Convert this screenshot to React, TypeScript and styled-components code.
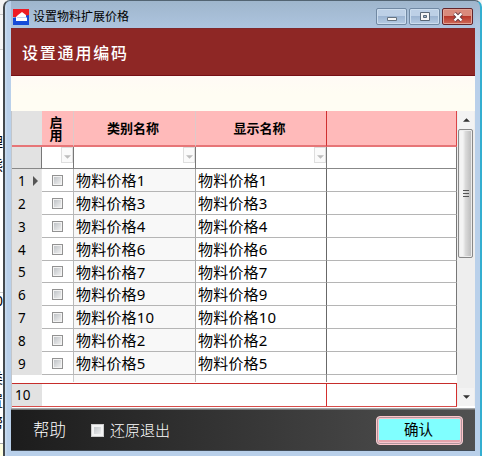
import React from "react";
import styled, { createGlobalStyle, css } from "styled-components";

const GlobalStyle = createGlobalStyle`
  * { box-sizing: border-box; }
  body { margin: 0; overflow: hidden; }
  #root { font-family: "Noto Sans", "Noto Sans CJK SC", sans-serif; color: #000; }
`;

const Desktop = styled.div`
  display: flex;
  width: 482px;
  height: 456px;
  overflow: hidden;
  background: #f4f4f4;
`;

const Backdrop = styled.div`
  position: relative;
  width: 3px;
  flex: none;
  overflow: hidden;
  background: linear-gradient(#f3f3f3 0 14px, #c9c9c9 14px 15px, #f6f6f6 15px 49px, #d0d0d0 49px 50px, #fff 50px 292px, #ccc 292px 293px, #fff 293px 443px, #aaa 443px 444px, #ffffe1 444px);
`;

const Peek = styled.span<{ $top: number; $shift: number }>`
  position: absolute;
  top: ${(p) => p.$top}px;
  left: ${(p) => p.$shift}px;
  font-size: 14px;
  line-height: 16px;
`;

const Frame = styled.div`
  display: flex;
  flex-direction: column;
  width: 479px;
  height: 456px;
  padding: 0 5px 0 6px;
  border-style: solid;
  border-width: 1px 2px 0 2px;
  border-color: #536472 #34aed0 #536472 #43494e;
  border-radius: 7px 7px 0 0;
  background: linear-gradient(90deg, #c9dcf0 0 1px, #b9d0ea 2px 6px, transparent 6px), linear-gradient(#9db5cd 0, #b1c8e1 24px, #b9d0ea 60px);
`;

const TitleBar = styled.header`
  display: flex;
  align-items: center;
  height: 27px;
  flex: none;
  padding: 4px 2px 0 2px;
  background: linear-gradient(#9fb6cc, #adc4df);
`;

const Title = styled.span`
  flex: 1;
  margin-left: 4px;
  font-size: 12px;
  line-height: 16px;
`;

const Caption = styled.span<{ $danger?: boolean }>`
  display: grid;
  place-items: center;
  width: 31px;
  height: 17px;
  margin-left: 2px;
  border: 1px solid ${(p) => (p.$danger ? "#64242a" : "#7189a3")};
  border-radius: 2px;
  box-shadow: inset 0 0 0 1px ${(p) => (p.$danger ? "#e2a395" : "#ccddee")};
  background: ${(p) =>
    p.$danger
      ? "linear-gradient(#d98a7c 0 45%, #b8372b 50%, #cf6a58)"
      : "linear-gradient(#bdd0e6 0 45%, #9db5d2 50%, #b6cce4)"};
`;

const Client = styled.main`
  display: flex;
  flex-direction: column;
  width: 464px;
  height: 423px;
  flex: none;
  background: #fff;
`;

const Banner = styled.h1`
  margin: 0;
  height: 48px;
  padding: 0 11px;
  flex: none;
  border-top: 1px solid #80282c;
  border-bottom: 1px solid #760f15;
  background: #8e2725;
  color: #fff;
  font-size: 16px;
  font-weight: 500;
  line-height: 48px;
  letter-spacing: 1.8px;
`;

const Spacer = styled.div`
  height: 35px;
  flex: none;
  background: linear-gradient(#fffaf5, #fffdf3 50%);
`;

const Content = styled.div`
  display: flex;
  height: 297px;
  flex: none;
  border-left: 1px solid #c3c6ca;
`;

const Grid = styled.div`
  width: 445px;
`;

const Line = styled.div<{ $height: number }>`
  display: grid;
  grid-template-columns: 30px 32px 122px 131px 130px;
  height: ${(p) => p.$height}px;
`;

const HeadLine = styled(Line)`
  font-size: 13px;
  font-weight: 700;
  line-height: 13px;
  text-align: center;
`;

const HeadCell = styled.div<{ $edge: string }>`
  display: flex;
  align-items: center;
  justify-content: center;
  padding: 1px 3px 0 0;
  background: #ffbaba;
  border-right: 1px solid ${(p) => p.$edge};
  border-bottom: 2px solid #e77577;
`;

const HeadGutter = styled.div`
  background: #e2e2e2;
  border-bottom: 2px solid #e77577;
`;

const FilterCell = styled.div<{ $edge?: string }>`
  display: flex;
  justify-content: flex-end;
  align-items: flex-start;
  border-right: 1px solid ${(p) => p.$edge ?? "#777"};
  border-bottom: 1px solid #888;
`;

const FilterGutter = styled(FilterCell)`
  background: #e2e2e2;
`;

const DropButton = styled.span`
  display: grid;
  place-items: center;
  width: 12px;
  height: 16px;
  padding-top: 3px;
  border: 1px solid #dedede;
  background: #fafafa;
`;

const cell = css`
  display: flex;
  align-items: center;
  border-right: 1px solid #b9b9b9;
  border-bottom: 1px solid #b5b5b5;
`;

const NumberCell = styled.div`
  display: flex;
  align-items: center;
  justify-content: space-between;
  padding: 0 3px 0 6px;
  background: #e2e2e2;
  border-right: 1px solid #e9e9e9;
  font-size: 13.5px;
`;

const CheckCell = styled.div`
  ${cell}
  justify-content: center;
`;

const TextCell = styled.div<{ $tinted?: boolean }>`
  ${cell}
  padding: 1px 0 0 2px;
  background: ${(p) => (p.$tinted ? "#f8f8f8" : "#fff")};
  border-right-color: ${(p) => (p.$tinted ? "#aaa" : "#686868")};
  font-size: 15px;
  line-height: 19px;
  letter-spacing: 0.2px;
  white-space: nowrap;
`;

const BlankCell = styled.div`
  ${cell}
  border-right-color: #777;
`;

const TailLine = styled(Line)`
  background: #fff;
`;

const TailCell = styled.div<{ $edge?: string; $fill?: string }>`
  height: 7px;
  background: ${(p) => p.$fill ?? "#fff"};
  border-right: 1px solid ${(p) => p.$edge ?? "transparent"};
`;

const SummaryLine = styled.div`
  display: grid;
  grid-template-columns: 30px 285px 130px;
  height: 24px;
  border-top: 1px solid #c62d2b;
  border-bottom: 1px solid #d74c4a;
`;

const SummaryNumber = styled.div`
  padding: 1px 0 0 3px;
  background: #e2e2e2;
  font-size: 13.5px;
  line-height: 20px;
`;

const SummaryCell = styled.div`
  border-right: 1px solid #d3302e;
`;

const Check = styled.span<{ $large?: boolean }>`
  width: ${(p) => (p.$large ? 13 : 11)}px;
  height: ${(p) => (p.$large ? 13 : 11)}px;
  flex: none;
  border: 1px solid ${(p) => (p.$large ? "#ccc" : "#929292")};
  box-shadow: inset 0 0 0 ${(p) => (p.$large ? 2 : 1)}px #f3f3f3;
  background: linear-gradient(135deg, #b9bdc1, #f6f6f6);
`;

const ScrollBar = styled.div`
  display: flex;
  flex-direction: column;
  width: 18px;
  height: 295px;
  padding: 0 1px;
  background: #eee;
`;

const ScrollArrow = styled.span`
  display: grid;
  place-items: center;
  height: 18px;
  background: #f3f3f3;
`;

const Thumb = styled.span`
  display: grid;
  place-items: center;
  width: 15px;
  height: 129px;
  margin-bottom: auto;
  border: 1px solid #888;
  border-radius: 2px;
  box-shadow: inset 0 0 0 1px #ededed;
  background: linear-gradient(90deg, #f4f4f4 0 30%, #dadada 50%, #b9b9b9);
`;

const Footer = styled.footer`
  display: flex;
  align-items: center;
  height: 43px;
  flex: none;
  padding: 1px 12px 0 22px;
  border-top: 1px solid #a5a7a9;
  border-bottom: 1px solid #414c57;
  background: linear-gradient(90deg, #1c1c1c, #373737 52%, #515151);
  box-shadow: inset 0 1px #777;
  color: #fff;
`;

const Help = styled.span`
  width: 58px;
  font-size: 16.5px;
  line-height: 20px;
  font-weight: 300;
`;

const Option = styled.label`
  display: flex;
  align-items: center;
  gap: 6px;
  flex: 1;
  font-size: 15px;
  line-height: 18px;
  font-weight: 300;
`;

const Confirm = styled.button`
  width: 87px;
  height: 29px;
  padding: 0 2px 3px 0;
  border: 1px solid #ffc6ca;
  border-radius: 4px;
  box-shadow: inset 0 0 0 1px #b4959d, inset 0 0 0 2px #f5c6cd, inset 0 -4px #e5a3aa;
  background: #80ffff;
  color: #000;
  font: 14.5px/21px "Noto Sans CJK SC", sans-serif;
`;

const Logo = () => (
  <svg width="16" height="16" viewBox="0 0 16 16">
    <path fill="#ed1c24" d="M0 0h16v8H0z" />
    <path fill="#164bd8" d="M0 9l16-3v10H0z" />
    <path fill="#fff" d="M3 8l2-2 4-3 4 3v2l1 1v3H3z" />
    <path stroke="#c3d4f3" d="M4 8.5h9" />
  </svg>
);

const Triangle = ({ up = false, color = "#333", width = 7 }: { up?: boolean; color?: string; width?: number }) => (
  <svg width={width} height="4" viewBox="0 0 8 4">
    <path fill={color} d={up ? "M0 4L4 0l4 4z" : "M0 0h8L4 4z"} />
  </svg>
);

const Filter = () => (
  <DropButton>
    <Triangle color="#bdbdbd" />
  </DropButton>
);

const suffixes = [1, 3, 4, 6, 7, 9, 10, 2, 5];
const behind = [
  { text: "理", top: 134, shift: -11 },
  { text: "熊", top: 157, shift: -11 },
  { text: "0", top: 293, shift: -5 },
  { text: "类", top: 370, shift: -11 },
  { text: "置", top: 393, shift: -11 },
  { text: "帮", top: 415, shift: -11 },
];

export default function App() {
  return (
    <>
      <GlobalStyle />
      <Desktop>
        <Backdrop>
          {behind.map((b) => (
            <Peek key={b.top} $top={b.top} $shift={b.shift}>{b.text}</Peek>
          ))}
        </Backdrop>
        <Frame>
          <TitleBar>
            <Logo />
            <Title>设置物料扩展价格</Title>
            <Caption>
              <svg width="12" height="12">
                <path d="M1.5 6.5h9v3h-9z" fill="#f5f5f5" stroke="#667380" />
              </svg>
            </Caption>
            <Caption>
              <svg width="12" height="10">
                <path d="M1.5.5h9v8h-9z" fill="#f5f5f5" stroke="#586675" />
                <path d="M4.5 3.5h3v2h-3z" fill="#9fb5ce" stroke="#586675" />
              </svg>
            </Caption>
            <Caption $danger>
              <svg width="12" height="10">
                <path d="M2.5 1.5l7 7m0-7l-7 7" stroke="#633a43" strokeWidth="4" />
                <path d="M2.5 1.5l7 7m0-7l-7 7" stroke="#fff" strokeWidth="2.4" />
              </svg>
            </Caption>
          </TitleBar>
          <Client>
            <Banner>设置通用编码</Banner>
            <Spacer />
            <Content>
              <Grid>
                <HeadLine $height={36}>
                  <HeadGutter />
                  <HeadCell $edge="#dfc9c9">启<br />用</HeadCell>
                  <HeadCell $edge="#dfc9c9">类别名称</HeadCell>
                  <HeadCell $edge="#cf3030">显示名称</HeadCell>
                  <HeadCell $edge="#da4547" />
                </HeadLine>
                <Line $height={22}>
                  <FilterGutter />
                  <FilterCell><Filter /></FilterCell>
                  <FilterCell><Filter /></FilterCell>
                  <FilterCell><Filter /></FilterCell>
                  <FilterCell />
                </Line>
                {suffixes.map((n, i) => (
                  <Line key={n} $height={i === 4 ? 22 : 23}>
                    <NumberCell>
                      {i + 1}
                      {i === 0 && (
                        <svg width="5" height="10"><path d="M0 0l5 5-5 5z" fill="#555" /></svg>
                      )}
                    </NumberCell>
                    <CheckCell><Check /></CheckCell>
                    <TextCell $tinted>物料价格{n}</TextCell>
                    <TextCell>物料价格{n}</TextCell>
                    <BlankCell />
                  </Line>
                ))}
                <TailLine $height={8}>
                  <TailCell />
                  <TailCell $edge="#ccc" />
                  <TailCell $edge="#bbb" $fill="#fafafa" />
                  <TailCell $edge="#888" />
                  <TailCell />
                </TailLine>
                <SummaryLine>
                  <SummaryNumber>10</SummaryNumber>
                  <SummaryCell />
                  <SummaryCell />
                </SummaryLine>
              </Grid>
              <ScrollBar>
                <ScrollArrow><Triangle up /></ScrollArrow>
                <Thumb>
                  <svg width="8" height="8">
                    <path d="M1 .5h6M1 3.5h6M1 6.5h6" stroke="#555" />
                  </svg>
                </Thumb>
                <ScrollArrow><Triangle /></ScrollArrow>
              </ScrollBar>
            </Content>
            <Footer>
              <Help>帮助</Help>
              <Option><Check $large />还原退出</Option>
              <Confirm>确认</Confirm>
            </Footer>
          </Client>
        </Frame>
      </Desktop>
    </>
  );
}
